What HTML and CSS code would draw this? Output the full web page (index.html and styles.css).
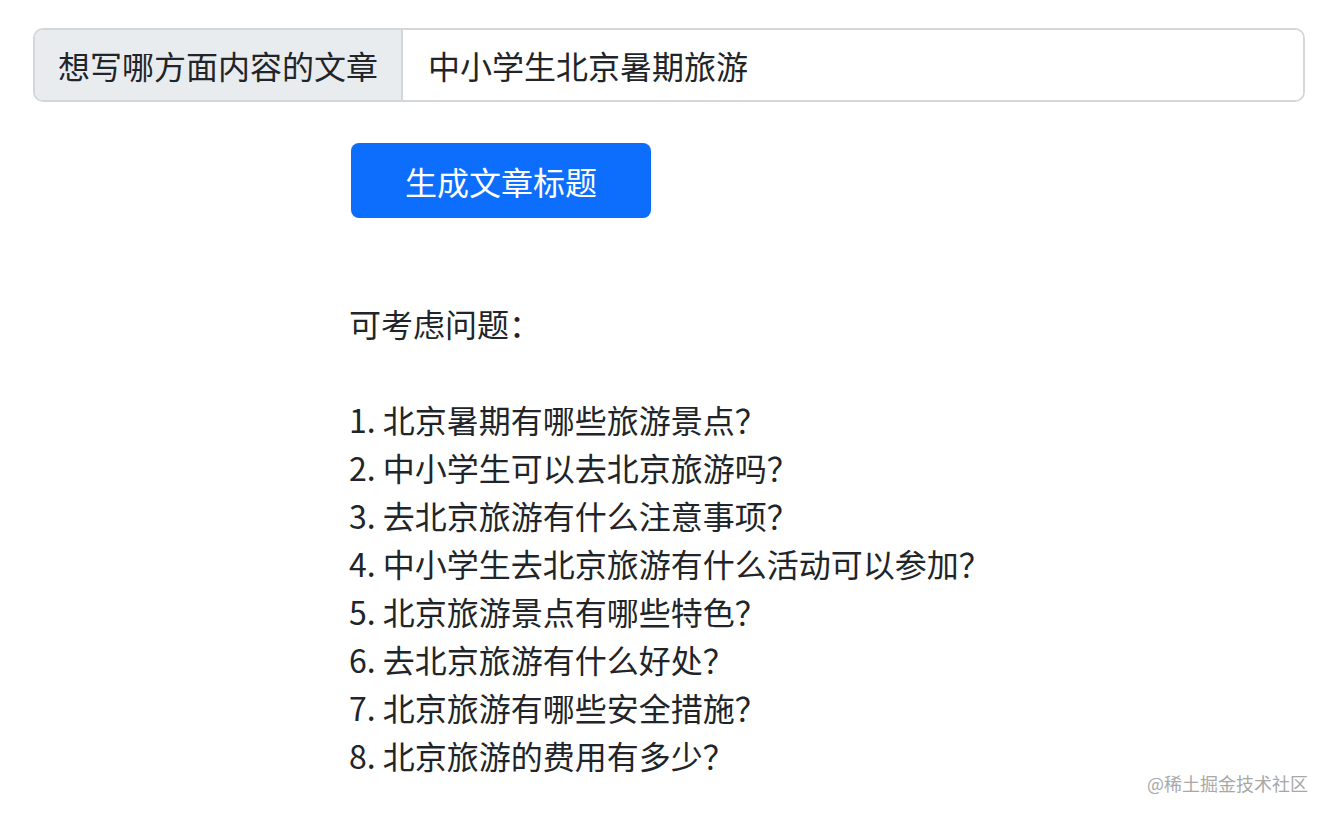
FILE: index.html
```html
<!DOCTYPE html>
<html lang="zh-CN">
<head>
<meta charset="utf-8">
<title>生成文章标题</title>
<link rel="stylesheet" href="styles.css">
</head>
<body>
<main class="page">
  <div class="input-group">
    <span class="input-group-text">想写哪方面内容的文章</span>
    <div class="form-control">中小学生北京暑期旅游</div>
  </div>
  <div class="offset">
    <button class="btn-primary" type="button">生成文章标题</button>
    <div class="result">可考虑问题：

1. 北京暑期有哪些旅游景点？
2. 中小学生可以去北京旅游吗？
3. 去北京旅游有什么注意事项？
4. 中小学生去北京旅游有什么活动可以参加？
5. 北京旅游景点有哪些特色？
6. 去北京旅游有什么好处？
7. 北京旅游有哪些安全措施？
8. 北京旅游的费用有多少？</div>
  </div>
</main>
<div class="watermark">@稀土掘金技术社区</div>
</body>
</html>
```

FILE: styles.css
```css
html, body {
  margin: 0;
  padding: 0;
  background: #ffffff;
}
body {
  font-family: "Noto Sans CJK SC", "Noto Sans", sans-serif;
  color: #212529;
  font-size: 32px;
  line-height: 48px;
  width: 1330px;
  height: 816px;
  overflow: hidden;
  position: relative;
}
.page {
  padding: 28px 25px 0 33px;
}
.input-group {
  display: flex;
  align-items: stretch;
  border: 2px solid #d4d7da;
  border-radius: 10px;
  overflow: hidden;
}
.input-group-text {
  background: #e9ecef;
  padding: 11px 23px;
  border-right: 2px solid #d4d7da;
  white-space: nowrap;
}
.form-control {
  flex: 1;
  background: #fff;
  padding: 11px 25px;
}
.offset {
  margin-left: 25%;
  display: flex;
  flex-direction: column;
  align-items: flex-start;
}
.btn-primary {
  margin-top: 41px;
  width: 300px;
  height: 75px;
  background: #0d6efd;
  color: #ffffff;
  border: none;
  border-radius: 8px;
  font-family: inherit;
  font-size: 32px;
  line-height: 48px;
  padding: 0;
  cursor: pointer;
}
.result {
  margin-top: 81px;
  margin-left: -2px;
  white-space: pre;
}
.watermark {
  position: absolute;
  right: 22px;
  bottom: 20px;
  font-size: 18px;
  line-height: 26px;
  color: #a8a8a8;
}
```
